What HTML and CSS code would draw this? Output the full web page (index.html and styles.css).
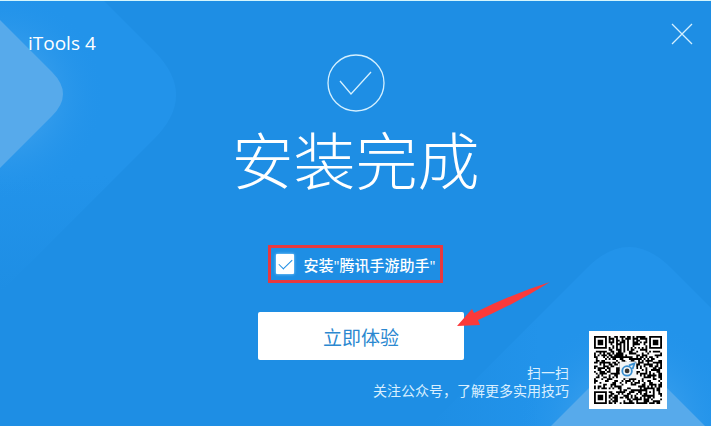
FILE: index.html
```html
<!DOCTYPE html>
<html lang="zh-CN">
  <head>
    <meta charset="UTF-8" />
    <meta name="viewport" content="width=device-width, initial-scale=1.0" />
    <title>iTools 4</title>
    <link rel="stylesheet" href="styles.css">
  </head>
  <body>
    <div class="installer">
      <svg class="corner corner-left" width="200" height="300" viewBox="0 0 200 300" aria-hidden="true">
        <defs>
          <linearGradient id="fade-left" x1="0" y1="0" x2="0" y2="1">
            <stop offset="0.6" stop-color="#2293ea" />
            <stop offset="1" stop-color="#1e8ee4" />
          </linearGradient>
          <radialGradient id="glow-left" gradientUnits="userSpaceOnUse" cx="0" cy="94" r="105">
            <stop offset="0.5" stop-color="#45a5ee" stop-opacity="0.4" />
            <stop offset="1" stop-color="#2293ea" stop-opacity="0" />
          </radialGradient>
        </defs>
        <path fill="url(#fade-left)" d="M0 0H104L154 50Q198 94 154 138L0 292Z" />
        <path fill="url(#glow-left)" d="M0 0H104L154 50Q198 94 154 138L0 292Z" />
        <path fill="#57aaeb" d="M0 19L52 71Q74 93 52 115L0 167Z" />
      </svg>
      <svg class="corner corner-right" width="290" height="190" viewBox="421 236 290 190" aria-hidden="true">
        <defs>
          <linearGradient id="fade-right" gradientUnits="userSpaceOnUse" x1="430" y1="0" x2="540" y2="0">
            <stop offset="0" stop-color="#1e8ee4" />
            <stop offset="1" stop-color="#2293ea" />
          </linearGradient>
          <radialGradient id="glow-right" gradientUnits="userSpaceOnUse" cx="628" cy="426" r="110">
            <stop offset="0.5" stop-color="#45a5ee" stop-opacity="0.4" />
            <stop offset="1" stop-color="#2293ea" stop-opacity="0" />
          </radialGradient>
        </defs>
        <path fill="url(#fade-right)" d="M429 426L587 268Q629 226 671 268L711 308V426Z" />
        <path fill="url(#glow-right)" d="M429 426L587 268Q629 226 671 268L711 308V426Z" />
        <path fill="#57aaeb" d="M551 426L606 371Q628 349 650 371L705 426Z" />
      </svg>

      <header class="titlebar">
        <span class="app-name">iTools 4</span>
        <button class="close" type="button" aria-label="关闭">
          <svg width="22" height="22" viewBox="0 0 22 22">
            <path d="M1 1L21 21M21 1L1 21" />
          </svg>
        </button>
      </header>

      <main class="content">
        <svg class="done-icon" width="58" height="58" viewBox="0 0 58 58" aria-hidden="true">
          <circle cx="29" cy="29" r="28" />
          <path d="M13 27L24 40L44 18" />
        </svg>
        <h1 class="heading">安装完成</h1>

        <label class="option">
          <input class="option-check" type="checkbox" checked>
          <span>安装"腾讯手游助手"</span>
        </label>

        <div class="action">
          <button class="start" type="button">立即体验</button>
          <svg class="arrow" width="94" height="46" viewBox="0 0 94 46" aria-hidden="true">
            <path d="M0 45L15 28L17 32Q55 13 93 1Q60 22 21 39L23 44Z" />
          </svg>
        </div>
      </main>

      <footer class="footer">
        <p class="follow">扫一扫<br>关注公众号，了解更多实用技巧</p>
        <svg class="qr" viewBox="0 0 37 37" role="img" aria-label="二维码">
          <path id="qr-modules" />
          <rect class="qr-plate" x="14" y="14" width="9" height="9" rx="1" />
          <circle class="qr-ring" cx="18" cy="19" r="2.6" />
          <path class="qr-ring" d="M19 16L22 15L21 18" />
          <circle class="qr-eye" cx="18" cy="19" r="1.3" />
        </svg>
      </footer>
    </div>

    <script>
      const SIZE = 37;
      let seed = 20164;

      function nextBit() {
        seed = (seed * 1103515245 + 12345) % 2147483648;
        return seed / 2147483648 < 0.5;
      }

      // 定位图形：7x7 外框 + 3x3 实心
      function finder(x, y) {
        const d = Math.max(Math.abs(x - 3), Math.abs(y - 3));
        return d === 3 || d <= 1;
      }

      function isDark(x, y) {
        const bit = nextBit();
        const right = x >= SIZE - 8;
        const bottom = y >= SIZE - 8;
        if ((x < 8 || right) && (y < 8 || bottom) && !(right && bottom)) {
          return finder(right ? x - SIZE + 7 : x, bottom ? y - SIZE + 7 : y);
        }
        // 右下角校正图形
        const d = Math.max(Math.abs(x - 30), Math.abs(y - 30));
        if (d <= 2) return d !== 1;
        if (x === 6 || y === 6) return (x + y) % 2 === 0;
        return bit;
      }

      let path = "";
      for (let y = 0; y < SIZE; y++) {
        for (let x = 0; x < SIZE; x++) {
          if (isDark(x, y)) path += `M${x} ${y}h1v1h-1z`;
        }
      }
      document.getElementById("qr-modules").setAttribute("d", path);
    </script>
  </body>
</html>
```

FILE: styles.css
```css
* {
  box-sizing: border-box;
}

body {
  margin: 0;
  font-family: "Open Sans", "Noto Sans CJK SC", sans-serif;
  font-size: 14px;
  color: white;
  background: #1e8ee4;
}

.installer {
  position: relative;
  display: flex;
  flex-direction: column;
  min-height: 100vh;
  overflow: hidden;
  border-top: 1px solid #d4f5fc;
}

.corner {
  position: absolute;
  pointer-events: none;
}

.corner-left {
  top: 0;
  left: 0;
}

.corner-right {
  right: 0;
  bottom: 0;
}

.titlebar,
.content,
.footer {
  position: relative;
}

.titlebar {
  display: flex;
  justify-content: space-between;
  align-items: flex-end;
  height: 53px;
  padding: 0 18px 0 28px;
}

.app-name {
  font-size: 19px;
  line-height: 22px;
}

.close {
  height: 40px;
  padding: 0;
  border: none;
  background: none;
  cursor: pointer;
}

.close svg {
  display: block;
  fill: none;
  stroke: #d4f0ff;
  stroke-width: 1.3;
}

.content {
  display: flex;
  flex-direction: column;
  align-items: center;
  /* 页脚与按钮同行，二维码向上伸出 */
  margin-bottom: -30px;
}

.done-icon {
  fill: none;
  stroke: #d4f0ff;
  stroke-width: 1.3;
}

.heading {
  margin: 14px 0 0;
  font-family: "Noto Sans CJK SC", sans-serif;
  font-size: 62px;
  font-weight: 300;
  line-height: 64px;
}

.option {
  display: flex;
  align-items: center;
  gap: 10px;
  height: 38px;
  margin-top: 55px;
  padding: 0 5px;
  border: 3px solid #e8393f;
  font-size: 15px;
  font-weight: 500;
  cursor: pointer;
}

.option-check {
  appearance: none;
  width: 18px;
  height: 20px;
  margin: 0;
  border-radius: 1px;
  background: white;
  box-shadow: 0 0 3px #a8dcff;
}

.option-check:checked::before {
  content: "";
  display: block;
  width: 12px;
  height: 6px;
  margin: 5px 3px;
  border-left: 1px solid #1e8ee4;
  border-bottom: 1px solid #1e8ee4;
  transform: rotate(-45deg);
}

.action {
  position: relative;
  margin: 29px 0 0 11px;
}

.start {
  display: block;
  width: 206px;
  height: 48px;
  padding: 0;
  border: none;
  border-radius: 2px;
  background: white;
  color: #2b88d0;
  font-family: "Noto Sans CJK SC", sans-serif;
  font-size: 19px;
  cursor: pointer;
}

.arrow {
  position: absolute;
  left: 199px;
  bottom: 33px;
  fill: #fb3a3a;
  pointer-events: none;
}

.footer {
  display: flex;
  justify-content: flex-end;
  gap: 20px;
  margin-top: auto;
  padding: 0 44px 17px;
  pointer-events: none;
}

.follow {
  align-self: flex-end;
  margin: 0 0 9px;
  line-height: 18px;
  text-align: right;
  color: #d9efff;
}

.qr {
  width: 78px;
  height: 78px;
  padding: 5px;
  background: white;
}

.qr-plate {
  fill: #f2f5f7;
}

.qr-ring {
  fill: none;
  stroke: #3a8fd0;
  stroke-width: 1;
}

.qr-eye {
  fill: #333;
}
```
